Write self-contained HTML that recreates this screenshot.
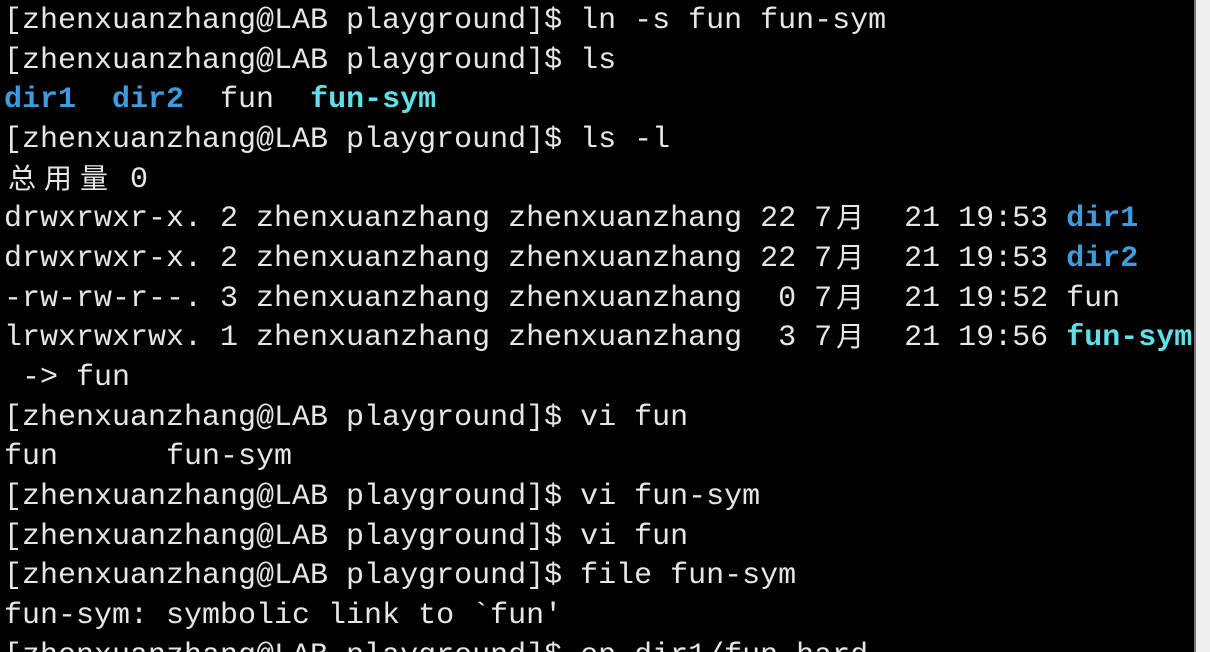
<!DOCTYPE html>
<html><head><meta charset="utf-8"><style>
html,body{margin:0;padding:0;background:#f0f0f0;}
#t{position:absolute;left:0;top:0;width:1194px;height:652px;background:#000;overflow:hidden;border-right:2px solid #777;}
#p{position:absolute;left:4px;top:2px;font-family:"Liberation Mono","Noto Sans CJK SC",monospace;font-size:30px;color:#e6e6e6;white-space:pre;}
#p div{height:39.67px;line-height:39.67px;overflow:visible;}
.b{color:#3b9de0;font-weight:bold}
.c{color:#5fe0e8;font-weight:bold}
.w{display:inline-block;width:36px;text-align:center;font-family:"Noto Sans CJK SC",sans-serif;font-size:28px;line-height:30px;vertical-align:top;margin-top:1px;}
</style></head><body><div id="t"><div id="p"><div>[zhenxuanzhang@LAB playground]$ ln -s fun fun-sym</div><div>[zhenxuanzhang@LAB playground]$ ls</div><div><span class="b">dir1</span>  <span class="b">dir2</span>  fun  <span class="c">fun-sym</span></div><div>[zhenxuanzhang@LAB playground]$ ls -l</div><div><span class="w">总</span><span class="w">用</span><span class="w">量</span> 0</div><div>drwxrwxr-x. 2 zhenxuanzhang zhenxuanzhang 22 7<span class="w">月</span>  21 19:53 <span class="b">dir1</span></div><div>drwxrwxr-x. 2 zhenxuanzhang zhenxuanzhang 22 7<span class="w">月</span>  21 19:53 <span class="b">dir2</span></div><div>-rw-rw-r--. 3 zhenxuanzhang zhenxuanzhang  0 7<span class="w">月</span>  21 19:52 fun</div><div>lrwxrwxrwx. 1 zhenxuanzhang zhenxuanzhang  3 7<span class="w">月</span>  21 19:56 <span class="c">fun-sym</span></div><div> -&gt; fun</div><div>[zhenxuanzhang@LAB playground]$ vi fun</div><div>fun      fun-sym</div><div>[zhenxuanzhang@LAB playground]$ vi fun-sym</div><div>[zhenxuanzhang@LAB playground]$ vi fun</div><div>[zhenxuanzhang@LAB playground]$ file fun-sym</div><div>fun-sym: symbolic link to `fun'</div><div>[zhenxuanzhang@LAB playground]$ cp dir1/fun-hard</div></div></div></body></html>
